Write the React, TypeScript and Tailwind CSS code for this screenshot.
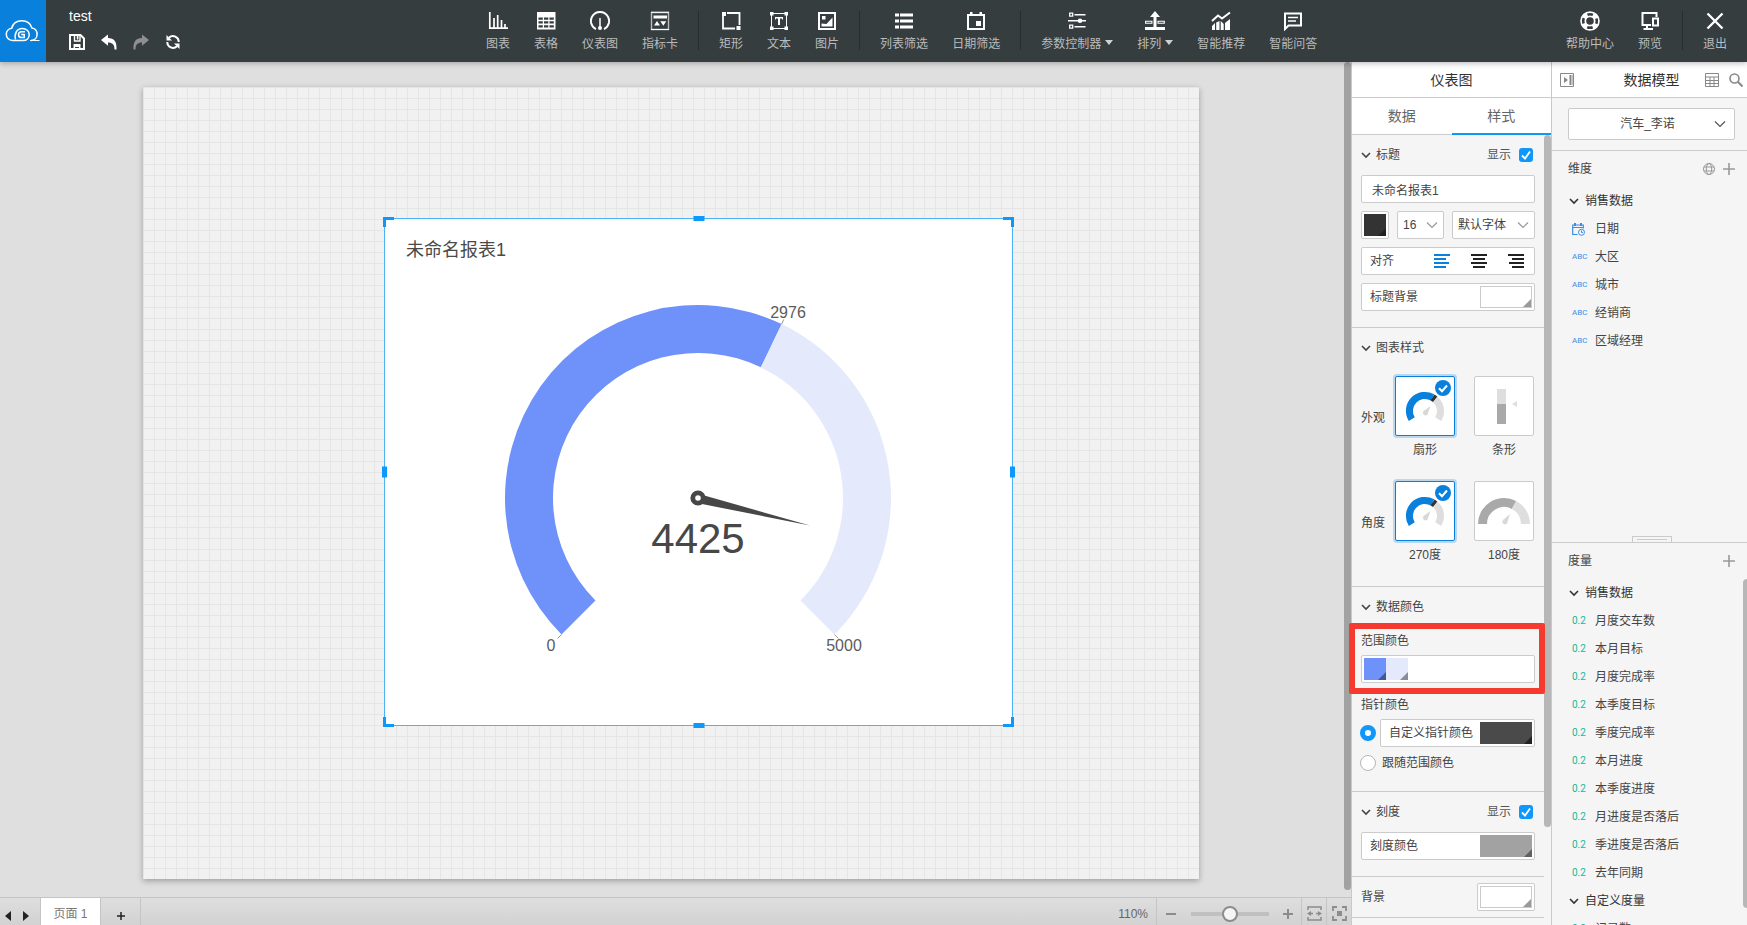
import type { ReactNode } from 'react';

const FONT = 'font-["Liberation_Sans","Noto_Sans_CJK_SC",sans-serif]';

/* ---------- icons ---------- */

function Svg({ size = 20, children, className = '' }: { size?: number; children: ReactNode; className?: string }) {
  return (
    <svg width={size} height={size} viewBox={`0 0 ${size} ${size}`} fill="none" className={className} aria-hidden="true">
      {children}
    </svg>
  );
}

const icons = {
  chart: (
    <Svg>
      <path d="M1.800 1v16.200H20M6 17V7M9.700 17V4M13.500 17V9M17 17v-4" stroke="#fff" strokeWidth="1.700" />
    </Svg>
  ),
  table: (
    <Svg>
      <path d="M1 1h18.500v17.500H1z" fill="#fff" />
      <path d="M2.500 6.500h4.300v2.300H2.500zM8 6.500h4.300v2.300H8zM13.500 6.500h4.300v2.300h-4.300zM2.500 10.300h4.300v2.300H2.500zM8 10.300h4.300v2.300H8zM13.500 10.300h4.300v2.300h-4.300zM2.500 14.200h4.300v2.300H2.500zM8 14.200h4.300v2.300H8zM13.500 14.200h4.300v2.300h-4.300z" fill="#363d3f" />
    </Svg>
  ),
  gauge: (
    <Svg>
      <path d="M6 18.200A9.100 9.100 0 1 1 14 18.200" stroke="#fff" strokeWidth="1.900" />
      <path d="M10 7v9" stroke="#fff" strokeWidth="1.500" />
      <circle cx="10" cy="17" r="2" fill="#fff" />
    </Svg>
  ),
  card: (
    <Svg>
      <path d="M1.500 1.500v17h17v-17z" stroke="#b9bcbd" strokeWidth="1.400" />
      <path d="M1 1.300h18M1 18.500h18" stroke="#fff" />
      <path d="M3.500 4.500h13.500v3H3.500zM4 14.500l3-4.500 3 4.500zM10.300 10.300h6l-3 4.500z" fill="#fff" />
    </Svg>
  ),
  rect: (
    <Svg>
      <path d="M2 5v12.500h12M6 2h12.500v12" stroke="#fff" strokeWidth="1.800" />
      <path d="M1 1h4v4H1zM15.500 15h4v4h-4z" fill="#fff" />
    </Svg>
  ),
  text: (
    <Svg>
      <path d="M2.500 2.500h15v15h-15z" stroke="#fff" strokeWidth="1" />
      <path d="M1 1h3.500v3.500H1zM15.500 1H19v3.500h-3.500zM1 15.500h3.500V19H1zM15.500 15.500H19V19h-3.500zM6 6h8v2.500h-1V7.500h-2V14H9V7.500H7v1H6z" fill="#fff" />
    </Svg>
  ),
  image: (
    <Svg>
      <path d="M2 2h16v16H2z" stroke="#fff" strokeWidth="2" />
      <path d="M5 5h3.500v3.500H5zM4.500 15.500v-3l5 .5 6-6.500v9z" fill="#fff" />
    </Svg>
  ),
  list: (
    <Svg>
      <path d="M1 2.500h4v3H1zM6 2.500h13v3H6zM1 8.500h4v3H1zM6 8.500h13v3H6zM1 14.500h4v3H1zM6 14.500h13v3H6z" fill="#fff" />
    </Svg>
  ),
  calendar: (
    <Svg>
      <path d="M2 4h16v14H2z" stroke="#fff" strokeWidth="2" />
      <path d="M4 1h2.500v3H4zM13.500 1H16v3h-2.500zM10 10h5v5h-5z" fill="#fff" />
    </Svg>
  ),
  params: (
    <Svg>
      <path d="M2.700 2.200h3v3h-3zM2.700 14.200h3v3h-3z" stroke="#fff" strokeWidth="1.300" />
      <path d="M7.500 3.700h11M1 9.700h18M7.500 15.700h11" stroke="#fff" strokeWidth="1.600" />
      <circle cx="13" cy="9.700" r="2.300" fill="#fff" />
    </Svg>
  ),
  arrange: (
    <Svg>
      <path d="M0 16h20v3H0zM8.500 16V6H5l5-6 5 6h-3.500v10z" fill="#fff" />
      <path d="M.6 10.200h6.300v2H.6zM13 10.200h6.300v2H13z" stroke="#fff" strokeWidth="1.100" />
    </Svg>
  ),
  recommend: (
    <Svg>
      <path d="M1 10l6-5.500 4 3L19 1.500" stroke="#fff" strokeWidth="2" />
      <path d="M1 15l3-3v7H1zM5.200 11.500L8.500 10v9H5.200zM9.700 10l3 3v6h-3zM14 12l5-4v11h-5z" fill="#fff" />
    </Svg>
  ),
  chat: (
    <Svg>
      <path d="M2 2.500h16v12H5.500L2 18z" stroke="#fff" strokeWidth="2" />
      <path d="M5 6.500h10M5 10h8" stroke="#fff" strokeWidth="1.500" />
    </Svg>
  ),
  help: (
    <Svg>
      <circle cx="10" cy="10" r="6.800" stroke="#fff" strokeWidth="6" />
      <circle cx="10" cy="10" r="6.800" stroke="#363d3f" strokeWidth="2.600" strokeDasharray="5.600 5.080" strokeDashoffset="2.800" />
    </Svg>
  ),
  preview: (
    <Svg>
      <path d="M16.500 6V2H2.500v12H11M7 14v4M3.500 18H13" stroke="#fff" strokeWidth="2" />
      <path d="M13 7.500h5v7h-5z" stroke="#fff" strokeWidth="2" />
    </Svg>
  ),
  exit: (
    <Svg>
      <path d="M2.500 2.500l15 15M17.500 2.500l-15 15" stroke="#fff" strokeWidth="2.400" />
    </Svg>
  ),
};

function Chevron({ className = '' }: { className?: string }) {
  return (
    <svg width="10" height="10" viewBox="0 0 10 10" fill="none" className={className} aria-hidden="true">
      <path d="M1 3l4 4 4-4" stroke="currentColor" strokeWidth="1.600" />
    </svg>
  );
}

function ThinChevron({ className = '' }: { className?: string }) {
  return (
    <svg width="12" height="10" viewBox="0 0 12 10" fill="none" className={className} aria-hidden="true">
      <path d="M1 2.500l5 5 5-5" stroke="currentColor" strokeWidth="1.200" />
    </svg>
  );
}

function Plus({ className = '' }: { className?: string }) {
  return (
    <svg width="12" height="12" viewBox="0 0 12 12" className={className} aria-hidden="true">
      <path d="M6 0v12M0 6h12" stroke="currentColor" strokeWidth="1.600" />
    </svg>
  );
}

/* ---------- top bar ---------- */

interface Tool {
  label: string;
  icon: ReactNode;
  caret?: boolean;
}

const insertTools: Tool[] = [
  { label: '图表', icon: icons.chart },
  { label: '表格', icon: icons.table },
  { label: '仪表图', icon: icons.gauge },
  { label: '指标卡', icon: icons.card },
];
const shapeTools: Tool[] = [
  { label: '矩形', icon: icons.rect },
  { label: '文本', icon: icons.text },
  { label: '图片', icon: icons.image },
];
const filterTools: Tool[] = [
  { label: '列表筛选', icon: icons.list },
  { label: '日期筛选', icon: icons.calendar },
];
const smartTools: Tool[] = [
  { label: '参数控制器', icon: icons.params, caret: true },
  { label: '排列', icon: icons.arrange, caret: true },
  { label: '智能推荐', icon: icons.recommend },
  { label: '智能问答', icon: icons.chat },
];

function ToolButton({ tool }: { tool: Tool }) {
  return (
    <button type="button" className="flex flex-col items-center px-3">
      <span className="h-5">{tool.icon}</span>
      <span className="mt-1 flex items-center text-xs leading-[18px] whitespace-nowrap text-[#b9bcbd]">
        {tool.label}
        {tool.caret && <span className="mb-1 ml-1 border-x-4 border-t-5 border-x-transparent border-t-[#d0d2d2]" />}
      </span>
    </button>
  );
}

function ToolGroup({ tools, first }: { tools: Tool[]; first?: boolean }) {
  return (
    <div className={first ? 'flex pr-2' : 'flex border-l border-[#282d2f] px-2'}>
      {tools.map((t) => (
        <ToolButton key={t.label} tool={t} />
      ))}
    </div>
  );
}

function TopBar() {
  return (
    <header className="relative z-20 flex h-[62px] shrink-0 bg-[#363d3f] shadow-[0_1px_6px_rgba(0,0,0,0.3)]">
      <a href="#home" aria-label="Home" className="flex w-[46px] items-center justify-center bg-[#0880dc]">
        <svg width="36" height="24" viewBox="0 0 36 24" fill="none" stroke="#fff" strokeWidth="1.500">
          <path d="M18 21.500H7.500C3.500 21.500 1.300 18.500 1.300 15.300s2.300-5.700 5.400-6.100C8 4.200 12 1.700 16.800 1.700s8.800 2.500 10.100 7.300c3.200.4 5.200 3.100 5.200 6.200 0 3.600-2.600 6.200-6.100 6.200" />
          <path d="M25 21.500h9.500" strokeWidth="1" />
          <path d="M10.500 20.500c-1.400-6 1.500-11 6.700-11 4.200 0 7 2.700 7 6.200 0 3.300-2.400 5.800-6.200 5.800" />
          <path d="M20 12.700h-3.300c-2 0-3.200 1.300-3.200 3s1.200 2.900 3.200 2.900h2.500V15.500h-3" />
        </svg>
      </a>
      <div className="flex w-[428px] flex-col pt-2 pl-[23px]">
        <span className="text-sm leading-4 text-white">test</span>
        <div className="mt-[10px] flex gap-4">
          <button type="button" aria-label="Save">
            <Svg size={16}>
              <path d="M1 1h10.500L15 4.500V15H1z" stroke="#fff" strokeWidth="2" />
              <path d="M5.500 1v6h5.500V1" stroke="#fff" strokeWidth="1.400" />
              <path d="M7.800 2h1.600v3.500H7.800zM4.500 10h7v6H10v-3H6v3H4.500z" fill="#fff" />
            </Svg>
          </button>
          <button type="button" aria-label="Undo">
            <Svg size={16}>
              <path d="M0 6l7-5.500v3.500c6 0 9 3.500 8.500 11.500h-2C13.500 10.500 11.500 8.500 7 8.500v3.300z" fill="#fff" />
            </Svg>
          </button>
          <button type="button" aria-label="Redo">
            <Svg size={16}>
              <path d="M16 6L9 .5V4C3 4 0 7.500.5 15.500h2C2.500 10.500 4.500 8.500 9 8.500v3.300z" fill="#8f8f8f" />
            </Svg>
          </button>
          <button type="button" aria-label="Refresh">
            <Svg size={16}>
              <path d="M4 3.700A5.700 5.700 0 0 1 13.700 8M12 12.300A5.700 5.700 0 0 1 2.300 8" stroke="#fff" strokeWidth="1.900" />
              <path d="M1.500 1v5.500H7zM14.500 15V9.500H9z" fill="#fff" />
            </Svg>
          </button>
        </div>
      </div>
      <nav className="flex h-[50px] flex-1 self-start pt-[11px]">
        <ToolGroup tools={insertTools} first />
        <ToolGroup tools={shapeTools} />
        <ToolGroup tools={filterTools} />
        <ToolGroup tools={smartTools} />
      </nav>
      <div className="flex h-[50px] self-start pt-[11px]">
        <ToolGroup tools={[{ label: '帮助中心', icon: icons.help }, { label: '预览', icon: icons.preview }]} first />
        <ToolGroup tools={[{ label: '退出', icon: icons.exit }]} />
      </div>
    </header>
  );
}

/* ---------- canvas ---------- */

function GaugeWidget() {
  return (
    <section className="absolute top-[131px] left-[241px] h-[508px] w-[629px] border border-[#4cb3f5] bg-white">
      <h2 className="absolute top-[18px] left-[21px] text-lg leading-[26px] text-[#4a4a4a]">未命名报表1</h2>
      <svg width="627" height="506" viewBox="1 0 627 506" className="block" role="img" aria-label="4425">
        <path d="M177.530 415.470A193 193 0 0 1 397.690 105.090L376.880 148.340A145 145 0 0 0 211.470 381.530Z" fill="#6e91fa" />
        <path d="M397.690 105.090A193 193 0 0 1 450.470 415.470L416.530 381.530A145 145 0 0 0 376.880 148.340Z" fill="#e5e9fc" />
        <path d="M177.500 415.500l-4 4M450.500 415.500l4 4M397.700 105l2-4.500" stroke="#999" />
        <path d="M315 275L426 306.500 313 284z" fill="#474747" />
        <circle cx="314" cy="279" r="5.200" fill="#fff" stroke="#474747" strokeWidth="4.800" />
        <g className="fill-[#5c5c5c] text-base" textAnchor="middle">
          <text x="404" y="99">2976</text>
          <text x="167" y="432">0</text>
          <text x="460" y="432">5000</text>
        </g>
        <text x="314" y="334" textAnchor="middle" className="fill-[#474747] text-[42px]">4425</text>
      </svg>
      <i className="absolute -top-[2px] -left-[2px] h-[10px] w-[11px] border-t-3 border-l-3 border-[#0d99fb]" />
      <i className="absolute -top-[2px] -right-[2px] h-[10px] w-[11px] border-t-3 border-r-3 border-[#0d99fb]" />
      <i className="absolute -bottom-[2px] -left-[2px] h-[10px] w-[11px] border-b-3 border-l-3 border-[#0d99fb]" />
      <i className="absolute -right-[2px] -bottom-[2px] h-[10px] w-[11px] border-r-3 border-b-3 border-[#0d99fb]" />
      <i className="absolute -top-[3px] left-1/2 h-[5px] w-[11px] -translate-x-1/2 bg-[#0d99fb]" />
      <i className="absolute -bottom-[3px] left-1/2 h-[5px] w-[11px] -translate-x-1/2 bg-[#0d99fb]" />
      <i className="absolute top-1/2 -left-[3px] h-[11px] w-[5px] -translate-y-1/2 bg-[#0d99fb]" />
      <i className="absolute top-1/2 -right-[3px] h-[11px] w-[5px] -translate-y-1/2 bg-[#0d99fb]" />
    </section>
  );
}

function StatusBar() {
  return (
    <footer className="flex h-7 shrink-0 border-t border-[#c4c4c4] bg-linear-to-b from-[#dedede] to-[#d2d2d2] text-xs text-[#666]">
      <div className="flex w-10 items-center gap-3 pt-2 pl-[5px]">
        <button type="button" aria-label="Previous page" className="border-y-5 border-r-6 border-y-transparent border-r-[#222]" />
        <button type="button" aria-label="Next page" className="border-y-5 border-l-6 border-y-transparent border-l-[#222]" />
      </div>
      <button type="button" className="w-[61px] border-x border-[#c4c4c4] bg-white pt-1 text-[#777]">页面 1</button>
      <button type="button" aria-label="Add page" className="flex w-10 items-center justify-center border-r border-[#c4c4c4] pt-2 text-[#222]">
        <svg width="8" height="8" viewBox="0 0 8 8"><path d="M4 0v8M0 4h8" stroke="currentColor" strokeWidth="1.500" /></svg>
      </button>
      <div className="flex flex-1 items-center justify-end pt-1 pr-2">110%</div>
      <div className="flex w-[145px] items-center justify-between border-l border-[#c4c4c4] pt-1 pr-2 pl-[9px] text-[#8c8c8c]">
        <button type="button" aria-label="Zoom out"><svg width="10" height="2" viewBox="0 0 10 2" className="block"><path d="M0 1h10" stroke="currentColor" strokeWidth="2" /></svg></button>
        <input
          type="range"
          aria-label="Zoom"
          min="0"
          max="200"
          defaultValue="102"
          className="h-4 w-[78px] appearance-none bg-[linear-gradient(#c0c0c0,#c0c0c0)] bg-size-[100%_4px] bg-center bg-no-repeat [&::-webkit-slider-thumb]:size-4 [&::-webkit-slider-thumb]:appearance-none [&::-webkit-slider-thumb]:rounded-full [&::-webkit-slider-thumb]:border-2 [&::-webkit-slider-thumb]:border-[#8c8c8c] [&::-webkit-slider-thumb]:bg-[#f5f5f5]"
        />
        <button type="button" aria-label="Zoom in"><svg width="10" height="10" viewBox="0 0 10 10" className="block"><path d="M5 0v10M0 5h10" stroke="currentColor" strokeWidth="2" /></svg></button>
      </div>
      <button type="button" aria-label="Fit width" className="flex w-[25px] items-center justify-center border-l border-[#c4c4c4] pt-1 text-[#8c8c8c]">
        <Svg size={15}>
          <path d="M1 4V1h13v3M1 11v3h13v-3M2 7.500h4M9 7.500h4" stroke="currentColor" strokeWidth="1.500" />
          <path d="M0 7.500L4 5v5zM15 7.500L11 5v5z" fill="currentColor" />
        </Svg>
      </button>
      <button type="button" aria-label="Fit page" className="flex w-[25px] items-center justify-center border-l border-[#c4c4c4] pt-1 text-[#8c8c8c]">
        <Svg size={15}>
          <path d="M1 5V1h4M10 1h4v4M14 10v4h-4M5 14H1v-4" stroke="currentColor" strokeWidth="1.800" />
          <path d="M5 5h5v5H5z" fill="currentColor" />
        </Svg>
      </button>
    </footer>
  );
}

function Workspace() {
  return (
    <main className="flex min-w-0 flex-1 flex-col bg-[#dfdfdf]">
      <div className="flex min-h-0 flex-1">
        <div className="min-w-0 flex-1 overflow-hidden pt-[25px] pl-[143px]">
          <div className="relative h-[792px] w-[1056px] bg-[#f1f1f1] bg-[linear-gradient(to_left,#e5e5e5_1px,transparent_1px),linear-gradient(to_top,#e5e5e5_1px,transparent_1px)] bg-size-[11px_11px] bg-position-[1px_1px] shadow-[0_2px_6px_rgba(0,0,0,0.3)]">
            <GaugeWidget />
          </div>
        </div>
        <div className="mb-[7px] w-[7px] rounded-full bg-[#a2a2a2]" />
      </div>
      <StatusBar />
    </main>
  );
}

/* ---------- style panel ---------- */

const boxClass = 'h-7 rounded-xs border border-[#cbcbcb] bg-white';

function Corner({ className }: { className: string }) {
  return <span className={`absolute right-0 bottom-0 size-2 [clip-path:polygon(100%_0,100%_100%,0_100%)] ${className}`} />;
}

function SectionTitle({ label, toggle }: { label: string; toggle?: boolean }) {
  return (
    <div className="flex h-5 items-center">
      <button type="button" className="flex items-center gap-[5px]">
        <Chevron />
        {label}
      </button>
      {toggle && (
        <label className="ml-auto flex items-center gap-2 pr-[2px] text-[#555]">
          显示
          <span className="relative size-[14px]">
            <input type="checkbox" defaultChecked className="block size-[14px] appearance-none rounded-[3px] bg-[#1097fa]" />
            <svg width="14" height="14" viewBox="0 0 14 14" fill="none" className="pointer-events-none absolute inset-0">
              <path d="M3 7.500L6 10.500 11 3.500" stroke="#fff" strokeWidth="1.800" />
            </svg>
          </span>
        </label>
      )}
    </div>
  );
}

function ArcThumb() {
  return (
    <svg width="58" height="58" viewBox="0 0 58 58" fill="none" aria-hidden="true">
      <path d="M15.800 42.200A15.500 15.500 0 0 1 36.500 20.400" stroke="#0880dc" strokeWidth="7" />
      <path d="M36.500 20.400L39.300 22.400" stroke="#333" strokeWidth="7" />
      <path d="M39.300 22.400A15.500 15.500 0 0 1 42.200 42.200" stroke="#dedede" strokeWidth="7" />
      <path d="M34.500 29L27.500 34c-2 3 1.500 6 4 3.500z" fill="#d8d8d8" />
      <circle cx="47" cy="11" r="8" fill="#0880dc" />
      <path d="M43 11.200l3 3 5-5.700" stroke="#fff" strokeWidth="2" />
    </svg>
  );
}

function BarThumb() {
  return (
    <svg width="58" height="58" viewBox="0 0 58 58" aria-hidden="true">
      <path d="M22 12h9v15h-9z" fill="#dedede" />
      <path d="M22 27h9v20h-9z" fill="#a9a9a9" />
      <path d="M42 24v6l-5-3z" fill="#dedede" />
    </svg>
  );
}

function HalfThumb() {
  return (
    <svg width="58" height="58" viewBox="0 0 58 58" fill="none" aria-hidden="true">
      <path d="M7.500 42A21.500 21.500 0 0 1 39 23" stroke="#a9a9a9" strokeWidth="9" />
      <path d="M39 23A21.500 21.500 0 0 1 50.500 42" stroke="#dedede" strokeWidth="9" />
      <path d="M35 32l-7 6c-2 3 1.500 6 4 3.500z" fill="#d8d8d8" />
    </svg>
  );
}

function Choice({ label, selected, children }: { label: string; selected?: boolean; children: ReactNode }) {
  return (
    <button type="button" className="flex flex-col items-center">
      <span
        className={
          selected
            ? 'size-[60px] rounded-xs border border-[#0880dc] bg-white shadow-[0_0_0_2px_rgba(8,128,220,0.25)]'
            : 'size-[60px] rounded-xs border border-[#cbcbcb] bg-white'
        }
      >
        {children}
      </span>
      <span className="mt-1 leading-5">{label}</span>
    </button>
  );
}

function SelectBox({ label, value, className }: { label: string; value: string; className: string }) {
  return (
    <div className={`relative ${className}`}>
      <select aria-label={label} className={`${boxClass} w-full appearance-none pl-[5px]`}>
        <option>{value}</option>
      </select>
      <ThinChevron className="pointer-events-none absolute top-[9px] right-[6px] text-[#999]" />
    </div>
  );
}

function AlignIcon({ d, className }: { d: string; className: string }) {
  return (
    <svg width="16" height="14" viewBox="0 0 16 14" className={className} aria-hidden="true">
      <path d={d} stroke="currentColor" strokeWidth="2" />
    </svg>
  );
}

function StylePanel() {
  return (
    <aside className="flex w-[200px] shrink-0 flex-col border-l border-[#c9c9c9] bg-[#f5f5f5] text-xs text-[#444]">
      <h2 className="flex h-9 shrink-0 items-center justify-center border-b border-[#cbcbcb] bg-white text-sm text-[#333]">仪表图</h2>
      <div className="flex h-[37px] shrink-0 bg-white text-sm text-[#666]">
        <button type="button" className="flex-1 border-b border-[#cbcbcb]">数据</button>
        <button type="button" className="flex-1 border-b-2 border-[#1097fa]">样式</button>
      </div>
      <div className="flex min-h-0 flex-1">
        <div className="flex min-w-0 flex-1 flex-col">
          <section className="flex shrink-0 flex-col gap-2 border-b border-[#cbcbcb] px-[9px] pt-[10px] pb-4">
            <div className="pb-[2px]">
              <SectionTitle label="标题" toggle />
            </div>
            <input aria-label="标题" defaultValue="未命名报表1" className={`${boxClass} w-full px-[10px]`} />
            <div className="flex gap-2">
              <button type="button" aria-label="标题颜色" className={`${boxClass} w-7 p-[2px]`}>
                <span className="relative block size-full bg-[#333]"><Corner className="bg-[#222]" /></span>
              </button>
              <SelectBox label="字号" value="16" className="w-[47px]" />
              <SelectBox label="字体" value="默认字体" className="flex-1" />
            </div>
            <div className={`${boxClass} flex items-center pl-2 text-[#222]`}>
              <span className="flex-1 text-[#444]">对齐</span>
              <div className="flex gap-[21px] pr-[10px]">
                <button type="button" aria-label="左对齐"><AlignIcon className="text-[#0880dc]" d="M0 1h16M0 5h12M0 9h15M0 13h12" /></button>
                <button type="button" aria-label="居中"><AlignIcon className="" d="M0 1h16M2 5h12M0 9h16M2 13h12" /></button>
                <button type="button" aria-label="右对齐"><AlignIcon className="" d="M0 1h16M4 5h12M1 9h15M4 13h12" /></button>
              </div>
            </div>
            <div className={`${boxClass} flex items-center justify-between pr-[2px] pl-2`}>
              标题背景
              <button type="button" aria-label="标题背景" className="relative h-[22px] w-[52px] border border-[#cbcbcb] bg-white"><Corner className="bg-[#999]" /></button>
            </div>
          </section>

          <section className="shrink-0 border-b border-[#cbcbcb] px-[9px] pt-[10px] pb-[21px]">
            <SectionTitle label="图表样式" />
            <div className="mt-[18px] flex items-center justify-between pr-px">
              <span>外观</span>
              <div className="flex gap-[19px]">
                <Choice label="扇形" selected><ArcThumb /></Choice>
                <Choice label="条形"><BarThumb /></Choice>
              </div>
            </div>
            <div className="mt-[21px] flex items-center justify-between pr-px">
              <span>角度</span>
              <div className="flex gap-[19px]">
                <Choice label="270度" selected><ArcThumb /></Choice>
                <Choice label="180度"><HalfThumb /></Choice>
              </div>
            </div>
          </section>

          <section className="shrink-0 border-b border-[#cbcbcb] px-[9px] pt-[10px] pb-[18px]">
            <SectionTitle label="数据颜色" />
            <div className="relative mt-[14px]">
              <div className="pointer-events-none absolute -top-2 -right-[10px] -bottom-[11px] -left-3 z-10 rounded-xs border-6 border-[#f53b30]" />
              <h3 className="leading-5">范围颜色</h3>
              <div className={`${boxClass} mt-1 flex p-[2px]`}>
                <button type="button" aria-label="范围颜色 1" className="relative size-[22px] bg-[#6e91fa]"><Corner className="bg-[#42568f]" /></button>
                <button type="button" aria-label="范围颜色 2" className="relative size-[22px] bg-[#e5e9fc]"><Corner className="bg-[#8a8c98]" /></button>
              </div>
            </div>
            <fieldset aria-label="指针颜色" className="mt-3">
              <h3 className="leading-5">指针颜色</h3>
              <div className="mt-1 flex items-center gap-1">
                <input type="radio" name="pointer" id="pointer-custom" defaultChecked className="-ml-px size-4 appearance-none rounded-full border-5 border-[#1097fa] bg-white" />
                <div className={`${boxClass} flex flex-1 items-center justify-between pr-[2px] pl-2`}>
                  <label htmlFor="pointer-custom">自定义指针颜色</label>
                  <button type="button" aria-label="指针颜色" className="relative h-[22px] w-[52px] bg-[#4a4a4a]"><Corner className="bg-[#222]" /></button>
                </div>
              </div>
              <div className="mt-[6px] flex h-5 items-center gap-[6px]">
                <input type="radio" name="pointer" id="pointer-follow" className="-ml-px size-4 appearance-none rounded-full border border-[#b5b5b5] bg-white" />
                <label htmlFor="pointer-follow">跟随范围颜色</label>
              </div>
            </fieldset>
          </section>

          <section className="shrink-0 border-b border-[#cbcbcb] px-[9px] pt-[10px] pb-4">
            <SectionTitle label="刻度" toggle />
            <div className={`${boxClass} mt-[10px] flex items-center justify-between pr-[2px] pl-2`}>
              刻度颜色
              <button type="button" aria-label="刻度颜色" className="relative h-[22px] w-[52px] bg-[#a2a2a2]"><Corner className="bg-[#606060]" /></button>
            </div>
          </section>

          <section className="flex shrink-0 items-center justify-between border-b border-[#cbcbcb] px-[9px] py-[6px]">
            背景
            <span className={`${boxClass} p-[2px]`}>
              <button type="button" aria-label="背景" className="relative block h-[22px] w-[52px] border border-[#cbcbcb] bg-white"><Corner className="bg-[#999]" /></button>
            </span>
          </section>
        </div>
        <div className="h-[692px] w-[7px] rounded-full bg-[#b7b7b7]" />
      </div>
    </aside>
  );
}

/* ---------- data model panel ---------- */

const dimensions = ['大区', '城市', '经销商', '区域经理'];
const measures = [
  '月度交车数',
  '本月目标',
  '月度完成率',
  '本季度目标',
  '季度完成率',
  '本月进度',
  '本季度进度',
  '月进度是否落后',
  '季进度是否落后',
  '去年同期',
];

function Folder({ label }: { label: string }) {
  return (
    <button type="button" className="flex h-7 items-center gap-[6px] pl-px text-[#333]">
      <Chevron />
      {label}
    </button>
  );
}

function Field({ icon, label }: { icon: ReactNode; label: string }) {
  return (
    <li className="flex h-7 items-center pl-1">
      <span className="flex w-[23px] items-center">{icon}</span>
      {label}
    </li>
  );
}

const textTag = <span className='font-["Liberation_Sans_Narrow",Roboto,sans-serif] text-[8px] text-[#3a8ee6]'>ABC</span>;
const numberTag = <span className='font-["Liberation_Sans_Narrow",Roboto,sans-serif] text-[10px] text-[#14b896]'>0.2</span>;

function ModelPanel() {
  return (
    <aside className="flex w-[196px] shrink-0 flex-col border-l border-[#c9c9c9] bg-[#f5f5f5] text-xs text-[#444]">
      <div className="flex h-9 shrink-0 items-center border-b border-[#cbcbcb] bg-white pr-1 pl-2 text-[#888]">
        <button type="button" aria-label="Collapse">
          <Svg size={14}>
            <path d="M.5.5h13v13H.5zM12 2v10" stroke="currentColor" />
            <path d="M4 4l4 3-4 3zM9.500 2H11v10H9.500z" fill="currentColor" />
          </Svg>
        </button>
        <h2 className="flex-1 pl-6 text-center text-sm text-[#333]">数据模型</h2>
        <button type="button" aria-label="Table view">
          <Svg size={14}>
            <path d="M.5.5h13v13H.5zM.5 4h13M.5 7.500h13M.5 10.500h13M5 4v9.500M9 4v9.500" stroke="currentColor" />
          </Svg>
        </button>
        <button type="button" aria-label="Search" className="ml-[10px]">
          <Svg size={14}>
            <circle cx="5.500" cy="5.500" r="4.500" stroke="currentColor" strokeWidth="1.600" />
            <path d="M9 9l4.500 4.500" stroke="currentColor" strokeWidth="2" />
          </Svg>
        </button>
      </div>
      <div className="relative shrink-0 border-b border-[#cbcbcb] pt-[10px] pr-3 pb-[10px] pl-4">
        <select aria-label="数据模型" className="h-8 w-full appearance-none rounded-xs border border-[#cbcbcb] bg-white pr-4 pl-2 text-center">
          <option>汽车_李诺</option>
        </select>
        <ThinChevron className="pointer-events-none absolute top-[21px] right-[21px] text-[#555]" />
      </div>
      <section className="h-[392px] shrink-0 border-b border-[#cbcbcb] pt-[6px] pr-3 pl-4">
        <div className="flex h-6 items-center gap-2 text-[#999]">
          <h3 className="flex-1 text-[#444]">维度</h3>
          <button type="button" aria-label="Geo">
            <Svg size={12}>
              <circle cx="6" cy="6" r="5.500" stroke="currentColor" />
              <ellipse cx="6" cy="6" rx="2.700" ry="5.500" stroke="currentColor" />
              <path d="M1 4h10M1 8h10" stroke="currentColor" />
            </Svg>
          </button>
          <button type="button" aria-label="添加维度"><Plus /></button>
        </div>
        <div className="mt-[6px]">
          <Folder label="销售数据" />
          <ul>
            <Field
              label="日期"
              icon={
                <Svg size={13}>
                  <path d="M5.500 11.500H.7V2h10.600v3.500M.7 4.500h10.600" stroke="#3a8ee6" strokeWidth="1.200" />
                  <path d="M2 0h2v3H2zM8 0h2v3H8z" fill="#3a8ee6" />
                  <circle cx="9.500" cy="9.300" r="3" stroke="#3a8ee6" />
                  <path d="M9.500 7.500v2h1.500" stroke="#3a8ee6" />
                </Svg>
              }
            />
            {dimensions.map((d) => (
              <Field key={d} label={d} icon={textTag} />
            ))}
          </ul>
        </div>
      </section>
      <div className="relative flex min-h-0 flex-1">
        <div className="absolute -top-[7px] left-20 h-[7px] w-10 border border-b-0 border-[#cbcbcb] px-1 pt-[2px]">
          <div className="h-px bg-[#cbcbcb]" />
        </div>
        <section className="min-w-0 flex-1 overflow-hidden pt-[6px] pr-2 pl-4">
          <div className="flex h-6 items-center justify-between text-[#999]">
            <h3 className="text-[#444]">度量</h3>
            <button type="button" aria-label="添加度量"><Plus /></button>
          </div>
          <div className="mt-[6px]">
            <Folder label="销售数据" />
            <ul>
              {measures.map((m) => (
                <Field key={m} label={m} icon={numberTag} />
              ))}
            </ul>
            <Folder label="自定义度量" />
            <ul>
              <Field label="记录数" icon={numberTag} />
            </ul>
          </div>
        </section>
        <div className="mt-9 mb-[17px] w-1 rounded-l-full bg-[#b7b7b7]" />
      </div>
    </aside>
  );
}

export default function App() {
  return (
    <div className={`flex h-screen flex-col overflow-hidden ${FONT}`}>
      <TopBar />
      <div className="flex min-h-0 flex-1">
        <Workspace />
        <StylePanel />
        <ModelPanel />
      </div>
    </div>
  );
}
